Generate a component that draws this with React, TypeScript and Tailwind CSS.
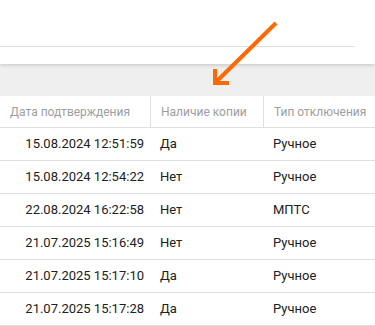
const ROWS = [
  { date: "15.08.2024 12:51:59", copy: "Да", type: "Ручное" },
  { date: "15.08.2024 12:54:22", copy: "Нет", type: "Ручное" },
  { date: "22.08.2024 16:22:58", copy: "Нет", type: "МПТС" },
  { date: "21.07.2025 15:16:49", copy: "Нет", type: "Ручное" },
  { date: "21.07.2025 15:17:10", copy: "Да", type: "Ручное" },
  { date: "21.07.2025 15:17:28", copy: "Да", type: "Ручное" },
];

export default function App() {
  return (
    <div className="relative w-[375px] h-[326px] overflow-hidden bg-[#efefef] font-['Roboto',sans-serif]">
      {/* top card */}
      <div className="relative z-10 h-16 bg-white shadow-[0_1px_4px_rgba(0,0,0,0.18)]">
        <div className="pt-[46px] pr-5">
          <div className="h-px bg-[#e0e0e0]" />
        </div>
      </div>

      <div className="h-8" />

      <div className="bg-white">
        <div className="grid grid-cols-[150px_113px_1fr] h-8 border-b border-[#e0e0e0] text-xs text-[#9e9e9e]">
          <div className="flex items-center pl-2.5 whitespace-nowrap">Дата подтверждения</div>
          <div className="flex items-center pl-2.5 border-l border-[#e0e0e0] whitespace-nowrap">Наличие копии</div>
          <div className="flex items-center pl-2.5 border-l border-[#e0e0e0] whitespace-nowrap">Тип отключения</div>
        </div>
        {ROWS.map((r, i) => (
          <div
            key={i}
            className="grid grid-cols-[150px_113px_1fr] h-[33px] border-b border-[#e0e0e0] text-[13px] text-[#212121]"
          >
            <div className="flex items-center justify-end pr-1.5 whitespace-nowrap">{r.date}</div>
            <div className="flex items-center pl-2.5">{r.copy}</div>
            <div className="flex items-center pl-2.5">{r.type}</div>
          </div>
        ))}
      </div>

      {/* annotation arrow */}
      <svg className="absolute left-0 top-0 z-20" width="375" height="326" viewBox="0 0 375 326">
        <g stroke="#ff6a00" strokeWidth="4" fill="none">
          <line x1="276" y1="23" x2="216" y2="82" />
          <polyline points="215,69 215,83 229,83" strokeLinecap="butt" />
        </g>
      </svg>
    </div>
  );
}
